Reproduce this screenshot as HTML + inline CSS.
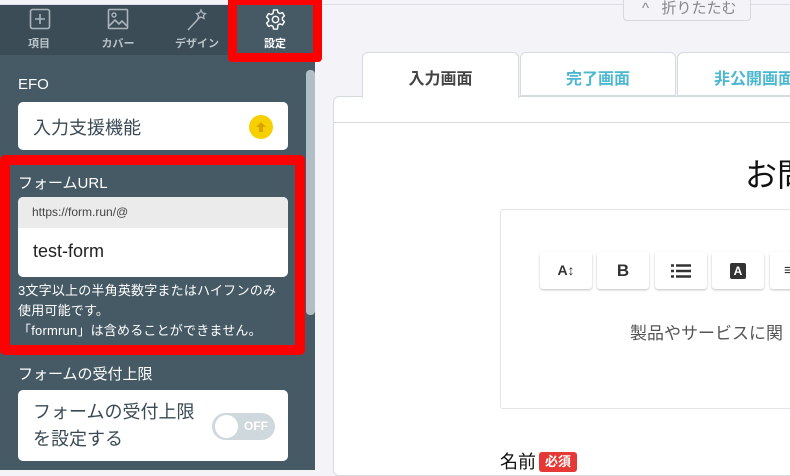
<!DOCTYPE html>
<html><head><meta charset="utf-8"><style>
*{box-sizing:border-box;margin:0;padding:0}
body{width:790px;height:470px;overflow:hidden;background:#f4f4f8;font-family:"Liberation Sans","Noto Sans CJK JP",sans-serif;position:relative}
.a{position:absolute}
.side{left:0;top:0;width:315px;height:470px;background:#465a65}
.nav{left:0;top:5px;width:315px;height:50px;background:#3c4c56}
.navi{color:#b8c2c8;font-size:11px;text-align:center;width:78px;font-weight:bold}
.lbl{color:#fff;font-size:15px;left:18px}
.card{background:#fff;border-radius:5px;left:18px;width:270px}
.tb{top:252px;height:37px;width:52px;background:#fff;border-radius:3px;box-shadow:0 1px 2px rgba(0,0,0,.25);font-size:15px;font-weight:bold;color:#333;text-align:center;line-height:37px}
</style></head><body>
<div class="a" style="left:0;top:0;width:790px;height:5px;background:#f4f4f8;border-bottom:1px solid #dde"></div>
<div class="a side" style="top:5px;height:465px"></div>
<div class="a nav"></div>
<div class="a" style="left:306px;top:70px;width:9px;height:245px;background:#b0bec5;border-radius:4px"></div>
<svg class="a" style="left:29px;top:8px" width="22" height="22" viewBox="0 0 22 22"><rect x="1.5" y="1.5" width="19" height="19" rx="2" fill="none" stroke="#aab4ba" stroke-width="1.6"/><path d="M11 6v10M6 11h10" stroke="#aab4ba" stroke-width="1.6"/></svg>
<div class="a navi" style="left:0;top:35px">項目</div>
<svg class="a" style="left:107px;top:8px" width="22" height="22" viewBox="0 0 22 22"><rect x="1.5" y="1.5" width="19" height="19" rx="1" fill="none" stroke="#aab4ba" stroke-width="1.6"/><circle cx="7" cy="7" r="2" fill="none" stroke="#aab4ba" stroke-width="1.4"/><path d="M2 18l6-6 4 4 3-3 5 5" fill="none" stroke="#aab4ba" stroke-width="1.6"/></svg>
<div class="a navi" style="left:79px;top:35px">カバー</div>
<svg class="a" style="left:186px;top:8px" width="22" height="24" viewBox="0 0 22 24"><path d="M2 22L14 9" stroke="#aab4ba" stroke-width="1.6"/><path d="M15 2l1.5 3 3 .5-2 2 .5 3-3-1.5-3 1.5.5-3-2-2 3-.5z" fill="none" stroke="#aab4ba" stroke-width="1.3"/></svg>
<div class="a navi" style="left:158px;top:35px">デザイン</div>
<div class="a" style="left:228px;top:-4px;width:94px;height:66px;border:9px solid #f00;border-radius:4px;background:#465a65"></div>
<svg class="a" style="left:264px;top:8px" width="23" height="23" viewBox="0 0 24 24"><path d="M10 2h4l.6 2.8 2 1 2.7-1 2 3.4-2.1 1.9v2.2l2.1 1.9-2 3.4-2.7-1-2 1L14 22h-4l-.6-2.8-2-1-2.7 1-2-3.4 2.1-1.9v-2.2L2.7 9.2l2-3.4 2.7 1 2-1z" fill="none" stroke="#fff" stroke-width="1.5" stroke-linejoin="round"/><circle cx="12" cy="12" r="3.3" fill="none" stroke="#fff" stroke-width="1.5"/></svg>
<div class="a navi" style="left:236px;top:35px;color:#fff">設定</div>

<div class="a lbl" style="top:76px">EFO</div>
<div class="a card" style="top:102px;height:48px"><div class="a" style="left:15px;top:12px;font-size:18px;color:#3a4a54">入力支援機能</div>
<div class="a" style="left:231px;top:13px;width:24px;height:24px;border-radius:50%;background:#f6d000;border:2px dotted #f6d000"></div>
<svg class="a" style="left:237px;top:19px" width="12" height="12" viewBox="0 0 12 12"><path d="M6 1L1 6h3v5h4V6h3z" fill="#d9a400"/></svg></div>

<div class="a" style="left:0;top:155px;width:305px;height:200px;border:10px solid #f00;border-radius:5px"></div>
<div class="a lbl" style="top:172px">フォームURL</div>
<div class="a card" style="top:197px;height:80px;overflow:hidden"><div style="height:31px;background:#ebebeb;font-size:12px;color:#444;padding:8px 0 0 14px">https://form.run/@</div><div style="font-size:18px;color:#222;padding:13px 0 0 15px">test-form</div></div>
<div class="a" style="left:18px;top:281px;color:#fff;font-size:13px;line-height:20px;letter-spacing:0.2px">3文字以上の半角英数字またはハイフンのみ<br>使用可能です。<br>「formrun」は含めることができません。</div>

<div class="a lbl" style="top:363px">フォームの受付上限</div>
<div class="a card" style="top:390px;height:71px"><div class="a" style="left:15px;top:9px;font-size:18px;color:#3a4a54;line-height:27px">フォームの受付上限<br>を設定する</div>
<div class="a" style="left:194px;top:23px;width:63px;height:27px;border-radius:14px;background:#cfd8dc"><div class="a" style="left:3px;top:2px;width:23px;height:23px;border-radius:50%;background:#fff"></div><div class="a" style="left:32px;top:6px;color:#fff;font-size:12px;font-weight:bold">OFF</div></div></div>

<div class="a" style="left:623px;top:-8px;width:128px;height:29px;border:1px solid #d6d8de;border-radius:4px;background:#f4f4f8;color:#888;font-size:15px;padding:4px 0 0 18px">^&nbsp;&nbsp;&nbsp;折りたたむ</div>
<div class="a" style="left:333px;top:96px;width:470px;height:380px;background:#fff;border:1px solid #d5dbe0;border-radius:6px"></div>
<div class="a" style="left:333px;top:122px;width:457px;height:1px;background:#d5dbe0"></div>
<div class="a" style="left:362px;top:52px;width:157px;height:46px;background:#fff;border:1px solid #d5dbe0;border-bottom:none;border-radius:6px 6px 0 0;text-align:center;font-size:16px;font-weight:bold;color:#444;padding-top:12px">入力画面</div>
<div class="a" style="left:520px;top:52px;width:156px;height:44px;background:#fff;border:1px solid #d5dbe0;border-radius:6px 6px 0 0;text-align:center;font-size:16px;font-weight:bold;color:#4bb8d0;padding-top:12px">完了画面</div>
<div class="a" style="left:677px;top:52px;width:130px;height:44px;background:#fff;border:1px solid #d5dbe0;border-radius:6px 6px 0 0;font-size:16px;font-weight:bold;color:#4bb8d0;padding:12px 0 0 36px;white-space:nowrap">非公開画面</div>
<div class="a" style="left:745px;top:150px;font-size:32px;color:#111;white-space:nowrap">お問</div>
<div class="a" style="left:500px;top:209px;width:300px;height:200px;border:1px solid #e2e4e8;border-radius:3px"></div>
<div class="a tb" style="left:540px;font-size:14px">A↕</div>
<div class="a tb" style="left:597px;font-size:17px">B</div>
<div class="a tb" style="left:655px"><svg width="20" height="14" viewBox="0 0 20 14" style="vertical-align:middle"><path d="M0 1.5h3M0 7h3M0 12.5h3M5 1.5h15M5 7h15M5 12.5h15" stroke="#333" stroke-width="2.4"/></svg></div>
<div class="a tb" style="left:712px"><span style="display:inline-block;background:#333;color:#fff;width:16px;height:16px;line-height:16px;font-size:12px;border-radius:2px;vertical-align:middle">A</span></div>
<div class="a tb" style="left:770px;text-align:left;padding-left:14px">≡</div>
<div class="a" style="left:630px;top:319px;font-size:17px;color:#555;white-space:nowrap">製品やサービスに関</div>
<div class="a" style="left:500px;top:448px;font-size:18px;color:#111">名前</div>
<div class="a" style="left:539px;top:452px;width:38px;height:20px;background:#e53935;border-radius:3px;color:#fff;font-size:13px;font-weight:bold;text-align:center;line-height:20px">必須</div>
</body></html>
